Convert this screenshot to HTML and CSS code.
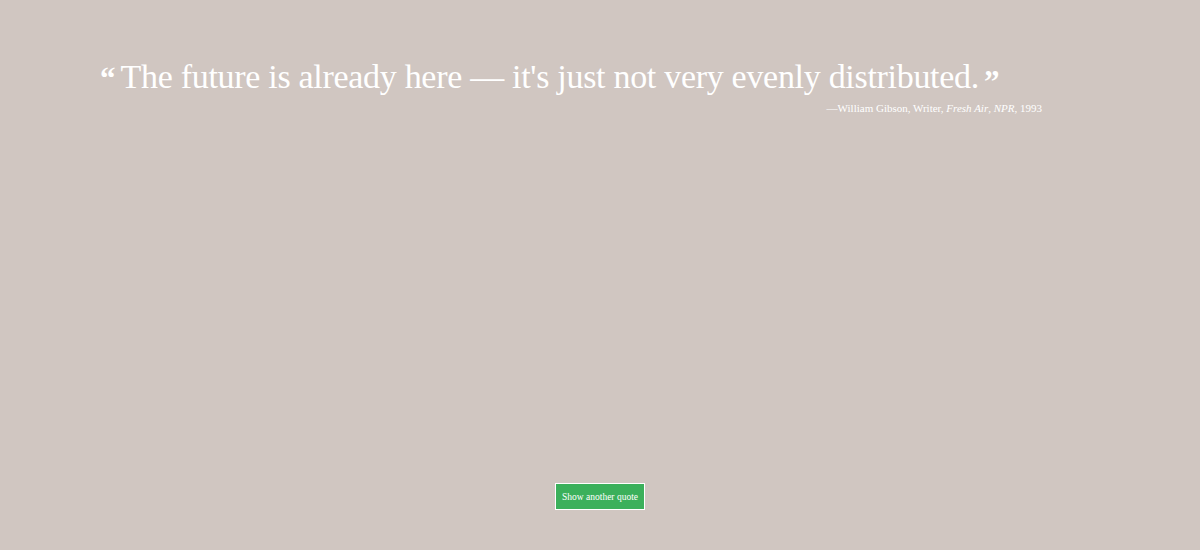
FILE: index.html
```html
<!DOCTYPE html>
<html lang="en">
<head>
<meta charset="utf-8">
<title>Quote</title>
<link rel="stylesheet" href="styles.css">
</head>
<body>
<main class="page">
  <figure class="quote">
    <blockquote class="quote-text"><span class="mark">&ldquo;</span>The future is already here — it's just not very evenly distributed.<span class="mark mark-close">&rdquo;</span></blockquote>
    <figcaption class="cite">—William Gibson, Writer, <em>Fresh Air</em>, <em>NPR</em>, 1993</figcaption>
  </figure>
  <div class="actions">
    <button class="btn" type="button">Show another quote</button>
  </div>
</main>
</body>
</html>
```

FILE: styles.css
```css
html, body {
  margin: 0;
  padding: 0;
  height: 100%;
}
body {
  background: #d0c6c1;
  font-family: "Liberation Serif", "DejaVu Serif", serif;
  color: #fff;
}
.page {
  height: 550px;
  display: flex;
  flex-direction: column;
  justify-content: space-between;
  box-sizing: border-box;
  padding: 57px 0 40px;
}
.quote {
  margin: 0;
  padding: 0 158px 0 100px;
}
.quote-text {
  margin: 0;
  font-size: 34px;
  line-height: 40px;
  letter-spacing: -0.3px;
  white-space: nowrap;
}
.mark {
  font-family: "Liberation Serif", serif;
  font-weight: bold;
  font-size: 31px;
  letter-spacing: 0;
  margin-right: 5px;
  line-height: 0;
  vertical-align: -1px;
}
.mark-close {
  margin-left: 5px;
  margin-right: 0;
  vertical-align: -4px;
}
.cite {
  text-align: right;
  font-size: 11px;
  line-height: 14px;
  margin-top: 4px;
}
.actions {
  display: flex;
  justify-content: center;
}
.btn {
  background: #3bb05b;
  color: #fff;
  border: 1px solid #fff;
  font-family: "Liberation Serif", "DejaVu Serif", serif;
  font-size: 9.5px;
  width: 90px;
  height: 27px;
  padding: 0;
  cursor: pointer;
}
```
